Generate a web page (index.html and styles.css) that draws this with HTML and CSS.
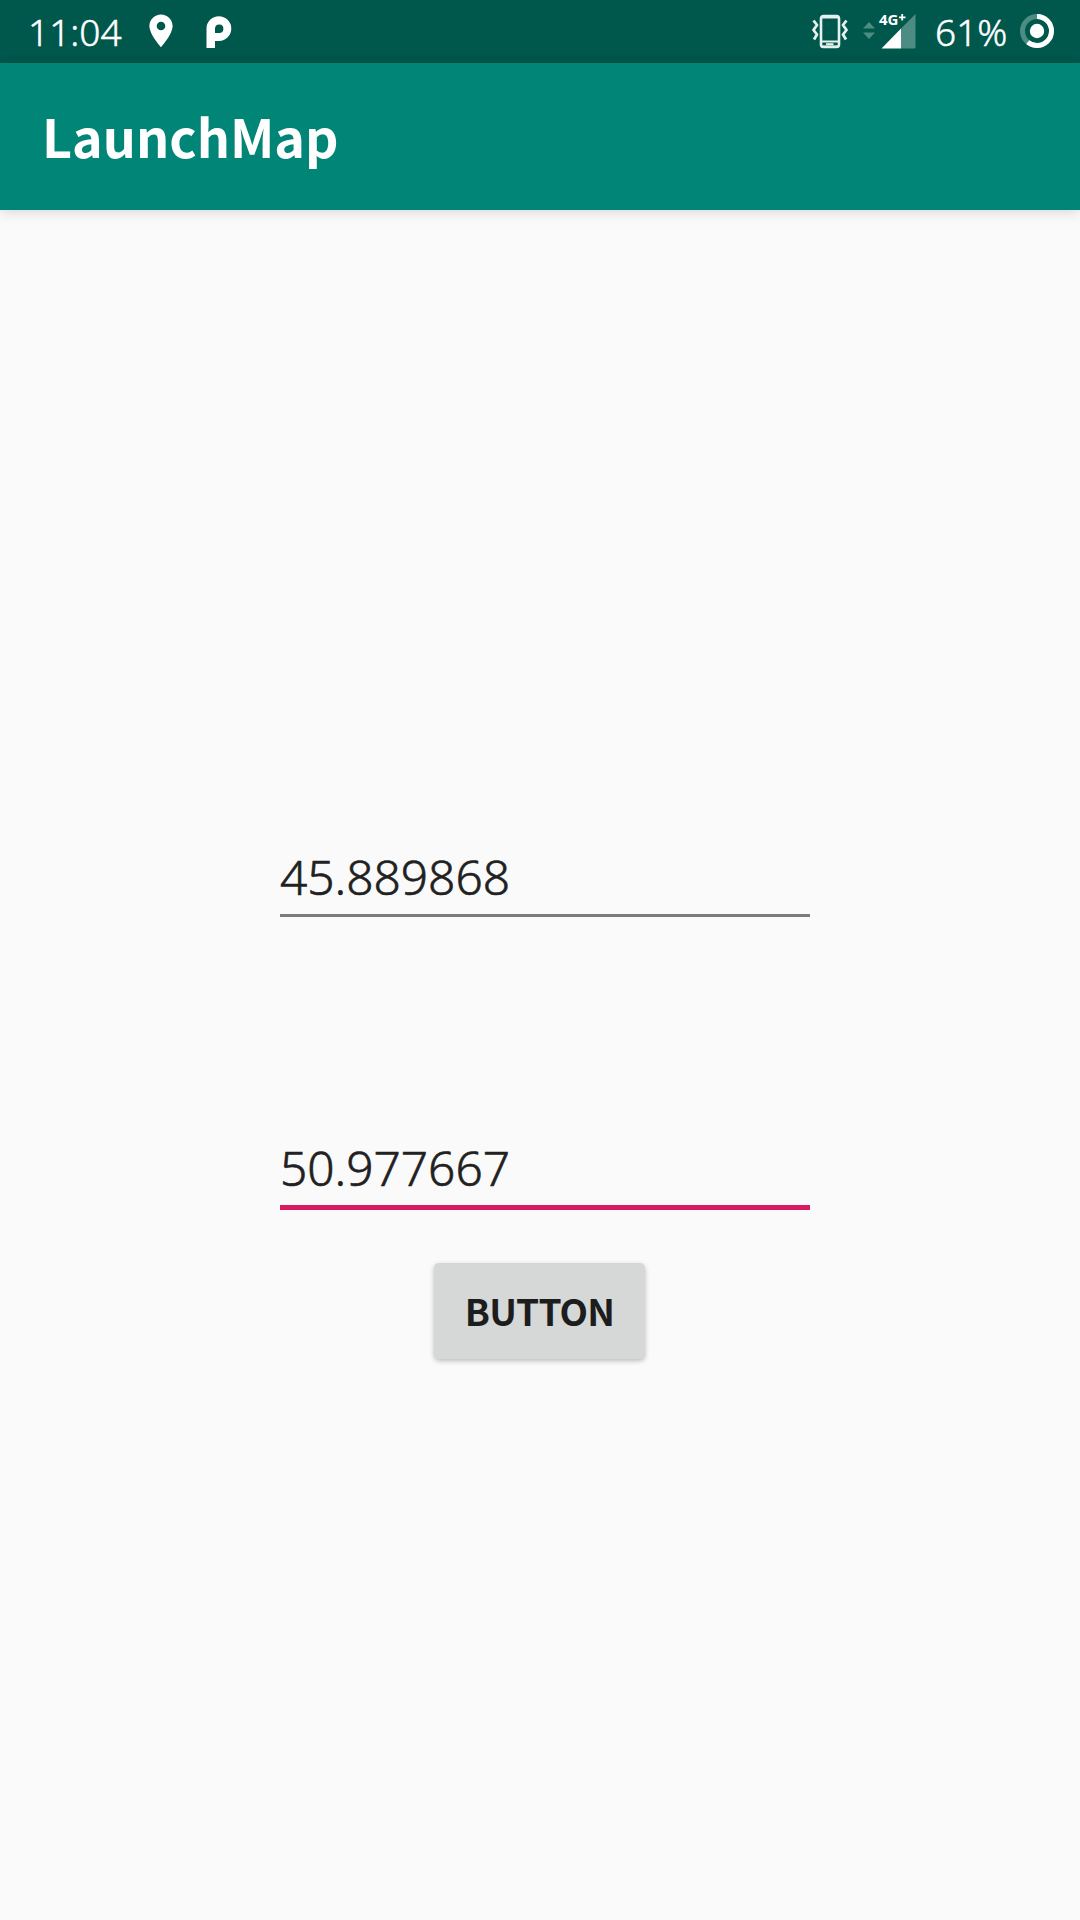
FILE: index.html
```html
<!DOCTYPE html>
<html lang="en">
<head>
<meta charset="utf-8">
<title>LaunchMap</title>
<link rel="stylesheet" href="styles.css">
</head>
<body>
<div class="screen">
  <header class="status-bar">
    <div class="status-left">
      <span class="clock">11:04</span>
      <svg class="icon-pin" width="24" height="34" viewBox="0 0 24 34"><path fill="#fff" fill-rule="evenodd" d="M12 .5C5.6.5.4 5.700.4 12c0 8.500 11.600 21.200 11.600 21.200S23.600 20.500 23.600 12C23.600 5.700 18.400.5 12 .5Zm0 7.200a4.300 4.300 0 1 1 0 8.600 4.300 4.300 0 0 1 0-8.600Z"/></svg>
      <svg class="icon-p" width="26" height="33" viewBox="0 0 26 33"><path fill="#fff" fill-rule="evenodd" d="M.5 32V12.600A12.400 12.400 0 1 1 13 25H9v7ZM9 17V12.500a4.200 4.200 0 1 1 4.200 4.500Z"/></svg>
    </div>
    <div class="status-right">
      <svg class="icon-vibrate" width="36" height="35" viewBox="0 0 36 35" fill="none" stroke="#e6f0ee"><rect x="9" y="2" width="18" height="31" rx="2.500" stroke-width="2.600"/><path stroke-width="2" d="M9 3.500h18M9 27.500h18M9 32.500h18"/><path stroke-width="2" d="M14 30.200h7.500"/><path stroke-width="2.800" d="M1.500 6.500 5 11 1.500 16 5 20.500 2 25.500M34.500 6.500 31 11l3.500 5-3.500 4.500 3 5" stroke-linejoin="round"/></svg>
      <svg class="icon-signal" width="54" height="36" viewBox="0 0 54 36"><path fill="#4d8c82" d="m6 9 6 6.500H0ZM0 19.500h12L6 26ZM52.500 1v33.500a1 1 0 0 1-1 1H38V15.500Z"/><path fill="#fff" d="M18.500 35.500 38 15.500v20Z"/><text class="network" x="16" y="12">4G</text><path stroke="#fff" stroke-width="1.800" d="M36 4.300h6.500M39.200 1v6.500"/></svg>
      <span class="percent">61%</span>
      <svg class="icon-battery" width="36" height="36" viewBox="0 0 36 36"><circle cx="18" cy="18" r="14.500" fill="none" stroke="#4d8c82" stroke-width="5"/><circle cx="18" cy="18" r="14.500" fill="none" stroke="#fff" stroke-width="5" pathLength="100" stroke-dasharray="61 39" transform="rotate(-90 18 18)"/><circle cx="18" cy="18" r="7.200" fill="#fff"/></svg>
    </div>
  </header>
  <div class="app-bar"><h1 class="title">LaunchMap</h1></div>
  <main class="content">
    <div class="field">45.889868</div>
    <div class="field field-focused">50.977667</div>
    <button class="button" type="button">BUTTON</button>
  </main>
</div>
</body>
</html>
```
FILE: styles.css
```css
body {
  margin: 0;
  background: #fafafa;
  font-family: "Noto Sans", sans-serif;
}

.screen {
  display: flex;
  flex-direction: column;
  width: 1080px;
  height: 1920px;
  overflow: hidden;
}

.status-bar {
  display: flex;
  justify-content: space-between;
  height: 63px;
  box-sizing: border-box;
  padding: 0 25px 0 28px;
  background: #00574b;
  color: #fff;
}

.status-left,
.status-right {
  display: flex;
  align-items: flex-start;
}

.clock,
.percent {
  font-size: 37px;
  font-weight: 300;
  -webkit-text-stroke: 0.5px currentColor;
  line-height: 50px;
  margin-top: 7px;
  white-space: nowrap;
}

.clock { width: 121px; }
.percent { width: 84px; }

.icon-pin { margin-top: 14px; }
.icon-p { margin: 16px 0 0 33px; }
.icon-vibrate { margin: 14px 15px 0 0; }
.icon-signal {
  margin: 13px 18px 0 0;
  overflow: visible;
}
.icon-battery { margin-top: 13px; }

.network {
  fill: #fff;
  font-size: 15px;
  font-weight: 700;
}

.app-bar {
  height: 147px;
  background: #008577;
  box-shadow: 0 2px 12px rgba(0, 0, 0, 0.14);
}

.title {
  margin: 35px 0 0 42px;
  color: #fff;
  font-family: "Noto Sans CJK SC", "Noto Sans", sans-serif;
  font-size: 52px;
  font-weight: 700;
  line-height: 76px;
}

.content {
  display: flex;
  flex-direction: column;
  align-items: center;
}

.field {
  width: 530px;
  height: 69px;
  margin: 635px 0 0 10px;
  border-bottom: 3px solid #7b7b7b;
  color: #212121;
  font-size: 47.8px;
  font-weight: 300;
  -webkit-text-stroke: 0.6px currentColor;
  line-height: 64px;
}

.field-focused {
  margin-top: 219px;
  border-bottom: 5px solid #d81b60;
}

.button {
  width: 211px;
  height: 96px;
  margin: 53px 0 0 -1px;
  padding: 0 0 3px;
  border: 0;
  border-radius: 5px;
  background: #d6d8d7;
  box-shadow: 0 2px 5px rgba(0, 0, 0, 0.25);
  color: #1d1d1d;
  font-family: "Noto Sans CJK SC", "Noto Sans", sans-serif;
  font-size: 37px;
  font-weight: 700;
  letter-spacing: -0.8px;
}
```
